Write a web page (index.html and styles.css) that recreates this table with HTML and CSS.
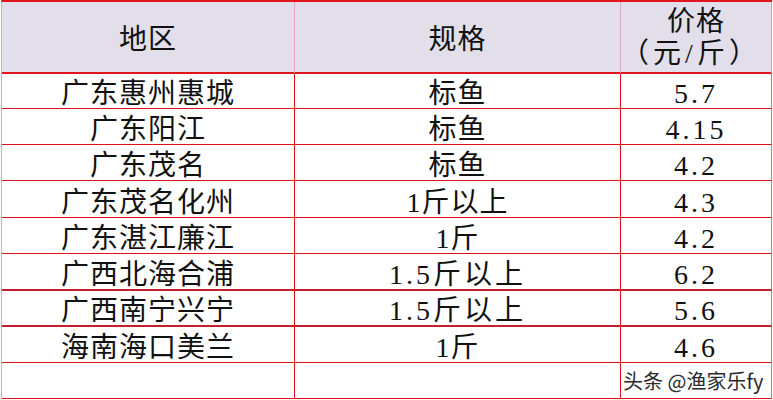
FILE: index.html
```html
<!DOCTYPE html>
<html lang="zh-CN">
<head>
<meta charset="utf-8">
<title>价格表</title>
<link rel="stylesheet" href="styles.css">
</head>
<body>
<div class="sheet">
  <div class="cell head">地区</div>
  <div class="cell head">规格</div>
  <div class="cell head last two"><span>价格</span><span class="unit">（元/斤）</span></div>

  <div class="cell">广东惠州惠城</div>
  <div class="cell">标鱼</div>
  <div class="cell last num">5.7</div>

  <div class="cell">广东阳江</div>
  <div class="cell">标鱼</div>
  <div class="cell last num">4.15</div>

  <div class="cell">广东茂名</div>
  <div class="cell">标鱼</div>
  <div class="cell last num">4.2</div>

  <div class="cell">广东茂名化州</div>
  <div class="cell">1斤以上</div>
  <div class="cell last num">4.3</div>

  <div class="cell">广东湛江廉江</div>
  <div class="cell">1斤</div>
  <div class="cell last num">4.2</div>

  <div class="cell thick">广西北海合浦</div>
  <div class="cell thick num">1.5斤以上</div>
  <div class="cell last thick num">6.2</div>

  <div class="cell thick">广西南宁兴宁</div>
  <div class="cell thick num">1.5斤以上</div>
  <div class="cell last thick num">5.6</div>

  <div class="cell">海南海口美兰</div>
  <div class="cell">1斤</div>
  <div class="cell last num">4.6</div>

  <div class="cell"></div>
  <div class="cell"></div>
  <div class="cell last mark">头条 @渔家乐fy</div>
</div>
</body>
</html>
```
FILE: styles.css
```css
html, body {
  margin: 0;
  padding: 0;
  background: #ffffff;
}

.sheet {
  margin-left: 1px;
  width: 771px;
  box-sizing: border-box;
  display: grid;
  grid-template-columns: 293px 326px 151px;
  grid-template-rows: 72px 35px 36px 36px 37px 36px 37px 36px 36px 36px;
  border-top: 2px solid #e2141c;
  border-left: 1px solid #e7a3b4;
  font-family: "Liberation Serif", "Noto Sans CJK SC", serif;
  font-size: 28px;
  color: #111111;
}

.cell {
  box-sizing: border-box;
  border-right: 1px solid #e0101a;
  border-bottom: 1px solid #e0101a;
  display: flex;
  align-items: flex-end;
  justify-content: center;
  line-height: 1;
  padding-bottom: 0;
  letter-spacing: 1px;
  white-space: nowrap;
}

.cell.last {
  border-right-color: #e07080;
}

.cell.thick {
  border-bottom: 2px solid #c4202c;
}

.head {
  background: #e2dfeb;
  border-bottom: 2px solid #e2141c;
  border-right-color: #dfa8b8;
  align-items: center;
  padding-top: 6px;
}

.head.last {
  border-right-color: #e0a0b0;
}

.two {
  flex-direction: column;
  justify-content: center;
  align-items: center;
  padding-top: 2px;
  line-height: 32px;
}

.unit {
  letter-spacing: 4px;
  margin-right: 10px;
}

.num {
  letter-spacing: 3px;
}

.mark {
  justify-content: flex-start;
  align-items: center;
  padding: 0 0 0 2px;
  font-family: "Noto Sans CJK SC", "Noto Sans", sans-serif;
  font-size: 20px;
  color: #2a2a2a;
  letter-spacing: 0;
}
```
